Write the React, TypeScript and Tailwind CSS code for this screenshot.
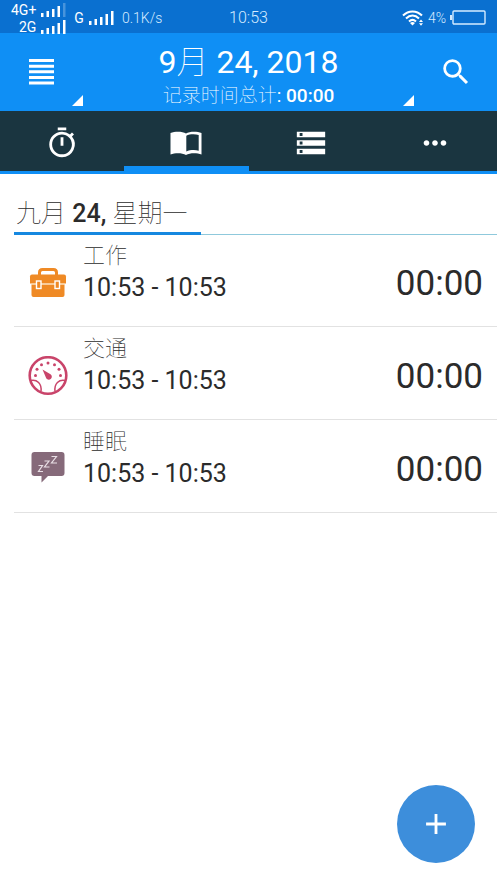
import React from 'react';
import { MdAdd, MdMoreHoriz, MdOutlineTimer, MdSearch, MdStorage } from 'react-icons/md';

interface Entry {
  name: string;
  range: string;
  total: string;
  icon: React.ReactNode;
}

function SignalBars({ dim = false }: { dim?: boolean }) {
  return (
    <svg width="26" height="14" viewBox="0 0 26 14" fill="currentColor" aria-hidden="true">
      <rect x="1" y="10" width="2.500" height="4" />
      <rect x="6.500" y="8" width="2.500" height="6" />
      <rect x="12" y="6" width="2.500" height="8" />
      <rect x="17.500" y="3" width="2.500" height="11" />
      <rect x="23" y="0" width="2.500" height="14" opacity={dim ? 0.25 : 1} />
    </svg>
  );
}

function WifiIcon() {
  return (
    <svg width="22" height="16" viewBox="0 0 22 16" fill="none" stroke="currentColor" strokeWidth="2" aria-hidden="true">
      <path d="M1 5.500C6.500 0 14.500 0 20 5.500" />
      <path d="M4 8.500C8 4.500 13 4.500 17 8.500" />
      <path d="M7 11.500C9.500 9.200 11.500 9.200 14 11.500" />
      <path d="M8 13q2.500-2 5 0l-2.500 2.500z" fill="currentColor" stroke="none" />
      <path d="M17 12l2-2.500 2 2.500zM17 13.200h4l-2 2.500z" fill="currentColor" stroke="none" />
    </svg>
  );
}

function BatteryIcon() {
  return (
    <svg width="36" height="15" viewBox="0 0 36 15" fill="none" stroke="currentColor" aria-hidden="true">
      <rect x="3" y="1" width="32" height="13" rx="1" strokeWidth="1.400" />
      <path d="M1 5v5" strokeWidth="2" />
    </svg>
  );
}

function MenuIcon() {
  return (
    <svg width="26" height="26" viewBox="0 0 26 26" fill="currentColor" aria-hidden="true">
      <path d="M0 0h25v3H0zM0 5.700h25v3H0zM0 11.300h25v3H0zM0 17h25v3H0zM0 22.500h25v3H0z" />
    </svg>
  );
}

function Corner() {
  return (
    <svg className="self-end" width="11" height="11" viewBox="0 0 11 11" fill="currentColor" aria-hidden="true">
      <path d="M11 0v11H0z" />
    </svg>
  );
}

function BookIcon() {
  return (
    <svg width="32" height="24" viewBox="0 0 32 24" aria-hidden="true">
      <path
        d="M16 2.500C12.500.300 5 .200.500 2v21.500c4.500-1.700 11.500-1.800 15.500.500 4-2.300 11-2.200 15.500-.500V2C27 .200 19.500.300 16 2.500zM28.700 4v15.700c-3.700-1-8.700-.900-12.400.900V4.700c3.200-1.700 8.700-1.900 12.400-.700z"
        fill="currentColor"
        fillRule="evenodd"
      />
    </svg>
  );
}

function BriefcaseIcon() {
  return (
    <svg width="40" height="40" viewBox="0 0 40 40" aria-hidden="true">
      <path d="M11.500 12v-2.500q0-3 3-3h11q3 0 3 3V12" fill="none" stroke="#ef8a25" strokeWidth="3" />
      <path d="M4 11.500h32q2 0 2 2v7H2v-7q0-2 2-2z" fill="#ef8a25" />
      <path d="M3.500 21.500h33V32q0 2-2 2h-29q-2 0-2-2z" fill="#ef8a25" />
      <path d="M3.500 21h33" stroke="#fbd3a4" strokeWidth="1.200" />
      <rect x="8.500" y="18" width="4.500" height="7.500" fill="#ef8a25" stroke="#fff" strokeWidth="1.400" />
      <rect x="27" y="18" width="4.500" height="7.500" fill="#ef8a25" stroke="#fff" strokeWidth="1.400" />
    </svg>
  );
}

function GaugeIcon() {
  return (
    <svg width="40" height="40" viewBox="0 0 40 40" aria-hidden="true">
      <circle cx="20" cy="19.500" r="18.300" fill="none" stroke="#c9446a" strokeWidth="2.600" />
      <path d="M2.500 24.500c6.500-1.500 11.500 3 10.500 11M37.500 24.500c-6.500-1.500-11.500 3-10.500 11" fill="none" stroke="#c9446a" strokeWidth="1.500" />
      <g fill="#c9446a">
        <circle cx="7.500" cy="19.500" r="1.500" />
        <circle cx="9" cy="13.200" r="1.500" />
        <circle cx="13.500" cy="8.700" r="1.500" />
        <circle cx="20" cy="7" r="1.500" />
        <circle cx="26.500" cy="8.700" r="1.500" />
        <circle cx="31" cy="13.200" r="1.500" />
        <circle cx="32.500" cy="19.500" r="1.500" />
        <path d="M14.500 13.500l8 4.700a3 3 0 1 1-4.500 3.500z" />
      </g>
    </svg>
  );
}

function SleepIcon() {
  return (
    <svg width="40" height="40" viewBox="0 0 40 40" aria-hidden="true">
      <path d="M6.500 3h27q3 0 3 3v18q0 3-3 3H20L13.500 33.500V27h-7q-3 0-3-3V6q0-3 3-3z" fill="#866a7a" />
      <g fill="none" stroke="#e9dfe5" strokeWidth="1.200">
        <path d="M10.500 16.500h4l-4 6h4.500" />
        <path d="M16.500 12h4.500l-4.500 6h5" />
        <path d="M23.500 7.500h5l-5 6.500h5.500" />
      </g>
    </svg>
  );
}

const cjk = 'font-["Noto_Sans_CJK_SC",sans-serif] font-thin';

const entries: Entry[] = [
  { name: '工作', range: '10:53 - 10:53', total: '00:00', icon: <BriefcaseIcon /> },
  { name: '交通', range: '10:53 - 10:53', total: '00:00', icon: <GaugeIcon /> },
  { name: '睡眠', range: '10:53 - 10:53', total: '00:00', icon: <SleepIcon /> },
];

const tabs = [
  { label: 'Timer', icon: <MdOutlineTimer size={34} /> },
  { label: 'Journal', icon: <BookIcon /> },
  { label: 'List', icon: <MdStorage size={34} /> },
  { label: 'More', icon: <MdMoreHoriz size={34} /> },
];

export default function App() {
  const [active, setActive] = React.useState(1);

  return (
    <div className='min-h-screen bg-white font-["Roboto","Noto_Sans_CJK_SC",sans-serif] text-[#2b2b2b]'>
      {/* Status bar */}
      <div className="grid h-[33px] grid-cols-[1fr_auto_1fr] items-center bg-[#0a70d0] px-[11px] text-[#d5ebff]">
        <div className="flex items-center gap-2">
          <div className="grid grid-cols-[auto_auto] items-center justify-items-end gap-x-1 gap-y-px pt-0.5 text-sm leading-4 text-white">
            <span>4G+</span>
            <SignalBars dim />
            <span>2G</span>
            <SignalBars />
          </div>
          <span className="flex items-center gap-1 text-sm text-white">
            G
            <SignalBars />
          </span>
          <span className="text-sm font-light">0.1K/s</span>
        </div>
        <span className="text-base font-light">10:53</span>
        <div className="flex items-center justify-end gap-1">
          <span className="text-white">
            <WifiIcon />
          </span>
          <span className="text-sm font-light">4%</span>
          <BatteryIcon />
        </div>
      </div>

      {/* Header */}
      <header className="grid h-[78px] grid-cols-[1fr_auto_1fr] bg-[#0f8ff5] text-white">
        <div className="flex w-[83px] pb-[5px]">
          <button type="button" aria-label="Menu" className="flex flex-1 items-center justify-end pt-1">
            <MenuIcon />
          </button>
          <span className="flex w-7 justify-end">
            <Corner />
          </span>
        </div>
        <div className="flex flex-col items-center pt-2">
          <h1 className="text-[32px] leading-9">
            9<span className={cjk}>月</span> 24, 2018
          </h1>
          <p className="text-[19px] leading-7">
            <span className={cjk}>记录时间总计</span>: <span className="font-medium">00:00</span>
          </p>
        </div>
        <div className="flex w-[94px] justify-self-end pb-[5px]">
          <Corner />
          <button type="button" aria-label="Search" className="flex flex-1 items-center justify-center pt-1">
            <MdSearch size={34} />
          </button>
        </div>
      </header>

      {/* Tabs */}
      <nav className="grid h-[63px] grid-cols-4 border-b-[3px] border-[#0f8ff5] bg-[#1a3540] text-white">
        {tabs.map((tab, i) => (
          <button
            key={tab.label}
            type="button"
            aria-label={tab.label}
            onClick={() => setActive(i)}
            className={`flex items-center justify-center border-b-[5px] pt-2 ${
              i === active ? 'border-[#0f8ff5]' : 'border-transparent'
            }`}
          >
            {tab.icon}
          </button>
        ))}
      </nav>

      {/* Journal */}
      <main className="pl-3.5">
        <div className="flex h-[61px] items-end border-b border-[#8fc9dc]">
          <h2 className="-mb-px w-[187px] border-b-[3px] border-[#1688e0] pl-0.5 text-[25px] leading-9 font-medium whitespace-nowrap">
            <span className={cjk}>九月</span> 24, <span className={cjk}>星期一</span>
          </h2>
        </div>
        <ul className="-mt-px">
          {entries.map((entry) => (
            <li key={entry.name} className="flex h-[93px] items-center border-b border-[#e2e2e2] px-3.5 pt-[5px]">
              {entry.icon}
              <div className="ml-[15px] flex h-full flex-1 flex-col gap-[3px]">
                <span className={`text-[22px] leading-7 ${cjk}`}>{entry.name}</span>
                <span className="text-[25px] leading-9">{entry.range}</span>
              </div>
              <span className="pt-0.5 text-[35px] leading-10">{entry.total}</span>
            </li>
          ))}
        </ul>
      </main>

      <button
        type="button"
        aria-label="Add"
        className="fixed right-[22px] bottom-[22px] flex size-[78px] items-center justify-center rounded-full bg-[#3d8edb] text-white"
      >
        <MdAdd size={34} />
      </button>
    </div>
  );
}
